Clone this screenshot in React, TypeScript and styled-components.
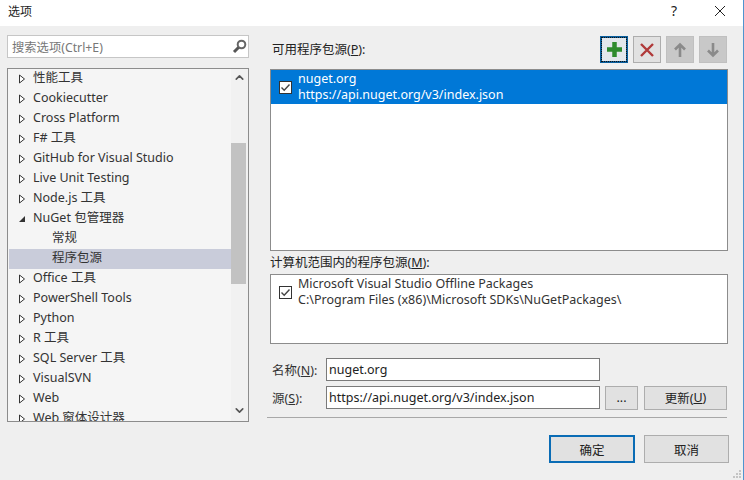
import React from "react";
import styled, { createGlobalStyle } from "styled-components";
import { ChevronUp, ChevronDown } from "lucide-react";

const Global = createGlobalStyle`
  html, body { margin: 0; padding: 0; background: #efefef; }
  body { font-family: "Noto Sans", "Noto Sans CJK SC", sans-serif; font-size: 13px; color: #1e1e1e; }
`;
const Dialog = styled.div`
  width: 744px;
  height: 480px;
  box-sizing: border-box;
  border-right: 1px solid #4f94cf;
  display: flex;
  flex-direction: column;
  overflow: hidden;
  position: relative;
`;
const TitleBar = styled.div`
  height: 26px;
  flex: none;
  background: #fff;
  display: flex;
  align-items: center;
  padding-left: 8px;
  font-size: 12px;
  color: #222;
`;
const TitleText = styled.span`
  flex: 1;
  margin-top: -5px;
`;
const TitleBtn = styled.div`
  width: 46px;
  height: 26px;
  display: flex;
  align-items: center;
  justify-content: center;
  margin-top: -5px;
  font-size: 14px;
`;
const Body = styled.div`
  flex: 1;
  display: flex;
  min-height: 0;
`;
const Left = styled.div`
  width: 242px;
  margin-left: 7px;
  padding-top: 9px;
  display: flex;
  flex-direction: column;
  gap: 10px;
  flex: none;
`;
const SearchBox = styled.div`
  height: 21px;
  flex: none;
  background: #fff;
  border: 1px solid #c6c6c6;
  display: flex;
  align-items: center;
  justify-content: space-between;
  padding: 0 1px 0 4px;
  color: #777;
  font-size: 12.3px;
`;
const Tree = styled.div`
  height: 352px;
  flex: none;
  border: 1px solid #8c8c8c;
  background: #f5f5f5;
  display: flex;
  overflow: hidden;
`;
const TreeList = styled.div`
  flex: 1;
  padding: 0 0 0 1px;
  min-width: 0;
`;
const Row = styled.div<{ $selected?: boolean; $child?: boolean }>`
  height: 20px;
  box-sizing: border-box;
  padding-bottom: 3px;
  display: flex;
  align-items: center;
  white-space: nowrap;
  line-height: 16px;
  padding-left: ${(p) => (p.$child ? "43px" : "6px")};
  background: ${(p) => (p.$selected ? "#c9ccda" : "transparent")};
  font-size: 12.5px;
  color: #333;
`;
const Arrow = styled.span`
  width: 18px;
  flex: none;
  display: flex;
  align-items: center;
  margin-left: 3px;
  margin-right: -3px;
  padding-top: 3px;
`;
const Scroll = styled.div`
  width: 17px;
  flex: none;
  display: flex;
  flex-direction: column;
  background: #f1f1f1;
`;
const ScrollBtn = styled.div`
  height: 17px;
  margin-bottom: 2px;
  flex: none;
  display: flex;
  align-items: center;
  justify-content: center;
  color: #555;
`;
const Thumb = styled.div`
  height: 141px;
  width: 15px;
  flex: none;
  margin-top: 55px;
  background: #c2c2c2;
`;
const Spacer = styled.div`
  flex: 1;
`;
const Right = styled.div`
  flex: 1;
  min-width: 0;
  padding: 10px 0 0 23px;
  display: flex;
  flex-direction: column;
`;
const Toolbar = styled.div`
  height: 27px;
  width: 455px;
  flex: none;
  display: flex;
  align-items: center;
  justify-content: space-between;
`;
const Tools = styled.div`
  display: flex;
  gap: 5px;
`;
const ToolBtn = styled.div<{ $focus?: boolean; $off?: boolean }>`
  width: 28px;
  height: 27px;
  box-sizing: border-box;
  display: flex;
  align-items: center;
  justify-content: center;
  background: ${(p) => (p.$off ? "#c8c8c8" : p.$focus ? "#e3e7ec" : "#e1e1e1")};
  border: ${(p) => (p.$focus ? "2px solid #0a5f9e" : p.$off ? "1px solid #c0c0c0" : "1px solid #adadad")};
  outline: ${(p) => (p.$focus ? "1px dotted #111" : "none")};
  outline-offset: -2px;
`;
const List = styled.div<{ $h: number; $top: number }>`
  width: 458px;
  height: ${(p) => p.$h}px;
  margin: ${(p) => p.$top}px 0 0 -2px;
  box-sizing: border-box;
  flex: none;
  background: #fff;
  border: 1px solid #8c8c8c;
`;
const Item = styled.div<{ $selected?: boolean }>`
  height: 34px;
  display: flex;
  align-items: center;
  background: ${(p) => (p.$selected ? "#0078d7" : "transparent")};
  color: ${(p) => (p.$selected ? "#fff" : "#333")};
  padding-left: 8px;
  gap: 6px;
`;
const Check = styled.span`
  width: 13px;
  height: 13px;
  box-sizing: border-box;
  flex: none;
  background: #fff;
  border: 1px solid #333;
  display: flex;
  align-items: center;
  justify-content: center;
`;
const ItemLines = styled.div`
  line-height: 16px;
  font-size: 12.5px;
  white-space: nowrap;
`;
const Label = styled.div<{ $top?: number; $left?: number }>`
  flex: none;
  height: 20px;
  line-height: 20px;
  padding-top: 1px;
  margin-top: ${(p) => p.$top ?? 0}px;
  margin-left: ${(p) => p.$left ?? 0}px;
  font-size: 12.5px;
  color: #222;
`;
const FieldRow = styled.div<{ $top: number }>`
  margin-top: ${(p) => p.$top}px;
  height: 23px;
  flex: none;
  display: flex;
  align-items: center;
`;
const FieldLabel = styled.div`
  width: 54px;
  flex: none;
  font-size: 12.5px;
  color: #333;
`;
const Field = styled.div`
  width: 274px;
  height: 23px;
  flex: none;
  box-sizing: border-box;
  background: #fff;
  border: 1px solid #7a7a7a;
  padding-left: 2px;
  display: flex;
  align-items: center;
  font-size: 12.5px;
  color: #222;
`;
const Btn = styled.div<{ $w: number; $h?: number; $ml?: number; $primary?: boolean }>`
  width: ${(p) => p.$w}px;
  height: ${(p) => p.$h ?? 24}px;
  margin-left: ${(p) => p.$ml ?? 0}px;
  box-sizing: border-box;
  flex: none;
  display: flex;
  align-items: center;
  justify-content: center;
  background: #e1e1e1;
  border: ${(p) => (p.$primary ? "2px solid #0a6cb5" : "1px solid #adadad")};
  font-size: 12.5px;
  color: #222;
`;
const Divider = styled.div`
  width: 460px;
  height: 1px;
  margin: 8px 0 0 -5px;
  background: #a8a8a8;
  flex: none;
`;
const Footer = styled.div`
  margin-top: 17px;
  display: flex;
  margin-left: 277px;
  gap: 9px;
  flex: none;
`;
const Grip = styled.svg`
  position: absolute;
  right: 1px;
  bottom: 1px;
`;
const U = styled.span`
  text-decoration: underline;
`;

const rows: { t: string; open?: boolean; child?: boolean; selected?: boolean }[] = [
  { t: "性能工具" },
  { t: "Cookiecutter" },
  { t: "Cross Platform" },
  { t: "F# 工具" },
  { t: "GitHub for Visual Studio" },
  { t: "Live Unit Testing" },
  { t: "Node.js 工具" },
  { t: "NuGet 包管理器", open: true },
  { t: "常规", child: true },
  { t: "程序包源", child: true, selected: true },
  { t: "Office 工具" },
  { t: "PowerShell Tools" },
  { t: "Python" },
  { t: "R 工具" },
  { t: "SQL Server 工具" },
  { t: "VisualSVN" },
  { t: "Web" },
  { t: "Web 窗体设计器" },
];

const CheckMark = () => (
  <svg width="11" height="11" viewBox="0 0 11 11">
    <path d="M1.5 5.5 L4.2 8.2 L9.5 2.5" fill="none" stroke="#444" strokeWidth="1.4" />
  </svg>
);

export default function App() {
  return (
    <Dialog>
      <Global />
      <TitleBar>
        <TitleText>选项</TitleText>
        <TitleBtn>?</TitleBtn>
        <TitleBtn>
          <svg width="12" height="12" viewBox="0 0 12 12">
            <path d="M1 1 L11 11 M11 1 L1 11" stroke="#222" strokeWidth="1" />
          </svg>
        </TitleBtn>
      </TitleBar>
      <Body>
        <Left>
          <SearchBox>
            搜索选项(Ctrl+E)
            <svg width="15" height="15" viewBox="0 0 15 15">
              <circle cx="9.5" cy="5.5" r="3.8" fill="none" stroke="#666" strokeWidth="2" />
              <path d="M6.5 8.5 L2 13" stroke="#555" strokeWidth="3" />
            </svg>
          </SearchBox>
          <Tree>
            <TreeList>
              {rows.map((r) => (
                <Row key={r.t} $child={r.child} $selected={r.selected}>
                  {!r.child && (
                    <Arrow>
                      <svg width="8" height="10" viewBox="0 0 8 10">
                        {r.open ? (
                          <path d="M1 8 L7 8 L7 2 Z" fill="#333" />
                        ) : (
                          <path d="M1.5 1 L6.5 5 L1.5 9 Z" fill="#fff" stroke="#333" />
                        )}
                      </svg>
                    </Arrow>
                  )}
                  {r.t}
                </Row>
              ))}
            </TreeList>
            <Scroll>
              <ScrollBtn>
                <ChevronUp size={13} strokeWidth={3} />
              </ScrollBtn>
              <Thumb />
              <Spacer />
              <ScrollBtn>
                <ChevronDown size={13} strokeWidth={3} />
              </ScrollBtn>
            </Scroll>
          </Tree>
        </Left>
        <Right>
          <Toolbar>
            <Label>
              可用程序包源(<U>P</U>):
            </Label>
            <Tools>
              <ToolBtn $focus>
                <svg width="17" height="17" viewBox="0 0 17 17">
                  <path d="M8.5 1 V16 M1 8.5 H16" stroke="#2e8b2e" strokeWidth="4.5" />
                </svg>
              </ToolBtn>
              <ToolBtn>
                <svg width="16" height="16" viewBox="0 0 16 16">
                  <path d="M2 2 L14 14 M14 2 L2 14" stroke="#b03a3a" strokeWidth="2.4" />
                </svg>
              </ToolBtn>
              <ToolBtn $off>
                <svg width="14" height="16" viewBox="0 0 14 16">
                  <path d="M7 15 V3 M2 7.5 L7 2.5 L12 7.5" fill="none" stroke="#8a8a8a" strokeWidth="2.6" />
                </svg>
              </ToolBtn>
              <ToolBtn $off>
                <svg width="14" height="16" viewBox="0 0 14 16">
                  <path d="M7 1 V13 M2 8.5 L7 13.5 L12 8.5" fill="none" stroke="#8a8a8a" strokeWidth="2.6" />
                </svg>
              </ToolBtn>
            </Tools>
          </Toolbar>
          <List $h={182} $top={6}>
            <Item $selected>
              <Check>
                <CheckMark />
              </Check>
              <ItemLines>
                nuget.org
                <br />
                https://api.nuget.org/v3/index.json
              </ItemLines>
            </Item>
          </List>
          <Label $top={1} $left={-2}>
            计算机范围内的程序包源(<U>M</U>):
          </Label>
          <List $h={70} $top={1}>
            <Item>
              <Check>
                <CheckMark />
              </Check>
              <ItemLines>
                Microsoft Visual Studio Offline Packages
                <br />
                C:\Program Files (x86)\Microsoft SDKs\NuGetPackages\
              </ItemLines>
            </Item>
          </List>
          <FieldRow $top={14}>
            <FieldLabel>
              名称(<U>N</U>):
            </FieldLabel>
            <Field>nuget.org</Field>
          </FieldRow>
          <FieldRow $top={5}>
            <FieldLabel>
              源(<U>S</U>):
            </FieldLabel>
            <Field>https://api.nuget.org/v3/index.json</Field>
            <Btn $w={33} $ml={5}>
              ...
            </Btn>
            <Btn $w={83} $ml={6}>
              更新(<U>U</U>)
            </Btn>
          </FieldRow>
          <Divider />
          <Footer>
            <Btn $w={86} $h={28} $primary>
              确定
            </Btn>
            <Btn $w={85} $h={28}>
              取消
            </Btn>
          </Footer>
        </Right>
      </Body>
      <Grip width="10" height="10" viewBox="0 0 10 10">
        <path d="M7 1h2v2H7zM4 4h2v2H4zM7 4h2v2H7zM1 7h2v2H1zM4 7h2v2H4zM7 7h2v2H7z" fill="#c4c4c4" />
      </Grip>
    </Dialog>
  );
}
